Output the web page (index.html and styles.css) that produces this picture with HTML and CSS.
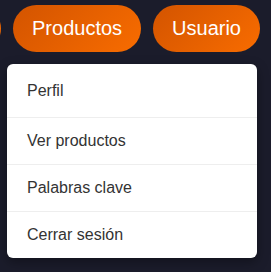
FILE: index.html
```html
<!DOCTYPE html>
<html lang="es">
  <head>
    <meta charset="UTF-8" />
    <meta name="viewport" content="width=device-width, initial-scale=1.0" />
    <title>Menu</title>
    <link rel="stylesheet" href="styles.css">
  </head>
  <body>
    <div class="nav">
      <button class="nav-btn">Inicio</button>
      <button class="nav-btn">Productos</button>
      <button class="nav-btn">Usuario</button>
    </div>
    <div class="dropdown">
      <div class="menu-item">Perfil</div>
      <div class="menu-item">Ver productos</div>
      <div class="menu-item">Palabras clave</div>
      <div class="menu-item">Cerrar sesión</div>
    </div>
  </body>
</html>
```

FILE: styles.css
```css
body {
  margin: 0;
  font-family: "Liberation Sans", Arial, sans-serif;
  background-color: #1b1c2b;
  position: relative;
  height: 272px;
  overflow: hidden;
}
.nav {
  display: flex;
  justify-content: flex-end;
  gap: 12px;
  padding: 5px 11px 0 0;
}
.nav-btn {
  flex-shrink: 0;
  font-family: inherit;
  font-size: 20px;
  line-height: 23px;
  padding: 12px 19px;
  border: none;
  border-radius: 24px;
  color: #fff;
  background: linear-gradient(135deg, #d35400, #f86c00);
  cursor: pointer;
}
.dropdown {
  position: absolute;
  left: 7px;
  top: 64px;
  width: 250px;
  background-color: #fff;
  border-radius: 6px;
  box-shadow: 0 4px 12px rgba(0, 0, 0, 0.35);
  overflow: hidden;
}
.menu-item {
  padding: 12px 20px;
  font-size: 16px;
  line-height: 22px;
  color: #333;
  border-top: 1px solid #eee;
}
.menu-item:first-child {
  border-top: none;
  padding: 16px 20px 15px;
}
```
